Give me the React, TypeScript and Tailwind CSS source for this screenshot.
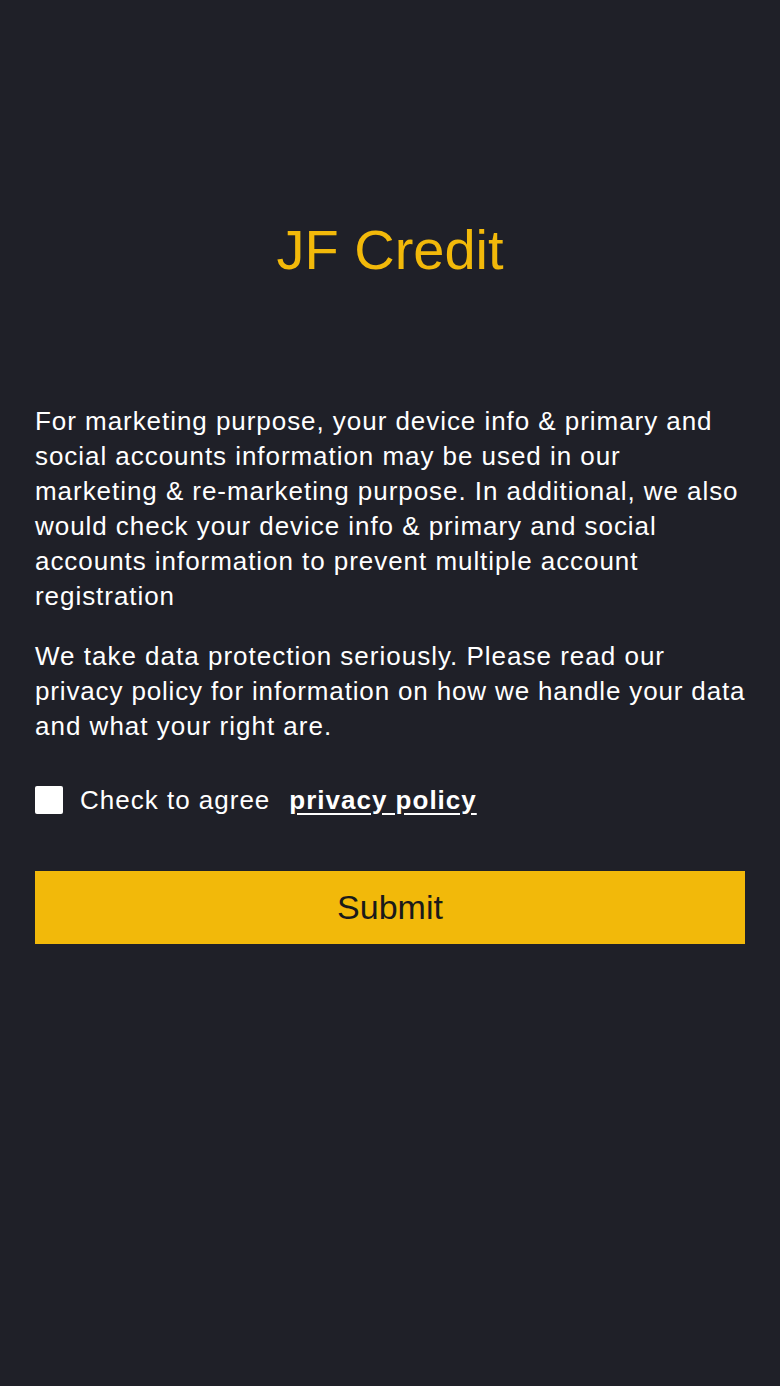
import React from "react";

export default function App() {
  return (
    <div
      className="w-[780px] h-[1386px] bg-[#1f2028] text-white"
      style={{ fontFamily: '"Liberation Sans", Arial, sans-serif' }}
    >
      <div className="pt-[218px] flex justify-center">
        <h1 className="text-[56px] leading-[64px] text-[#f2b90a] font-normal">JF Credit</h1>
      </div>
      <div className="px-[35px] pt-[122px]">
        <p className="text-[26px] leading-[35px] tracking-[0.95px]">
          For marketing purpose, your device info &amp; primary and social accounts information may be used in our marketing &amp; re-marketing purpose. In additional, we also would check your device info &amp; primary and social accounts information to prevent multiple account registration
        </p>
        <p className="text-[26px] leading-[35px] tracking-[1px] mt-[25px] whitespace-nowrap">
          We take data protection seriously. Please read our
          <br />
          <span className="tracking-[0.85px]">privacy policy for information on how we handle your data</span>
          <br />
          and what your right are.
        </p>
        <div className="flex items-center mt-[36px] h-[40px]">
          <div className="w-[28px] h-[28px] bg-white rounded-[2px]" />
          <span className="ml-[17px] text-[26px] tracking-[1px]">Check to agree</span>
          <span className="ml-[19px] text-[26px] tracking-[1px] font-bold underline underline-offset-[4px]">privacy policy</span>
        </div>
        <button className="mt-[51px] w-full h-[73px] bg-[#f2b90a] text-[#1a1a1a] text-[34px] flex items-center justify-center">
          Submit
        </button>
      </div>
    </div>
  );
}
